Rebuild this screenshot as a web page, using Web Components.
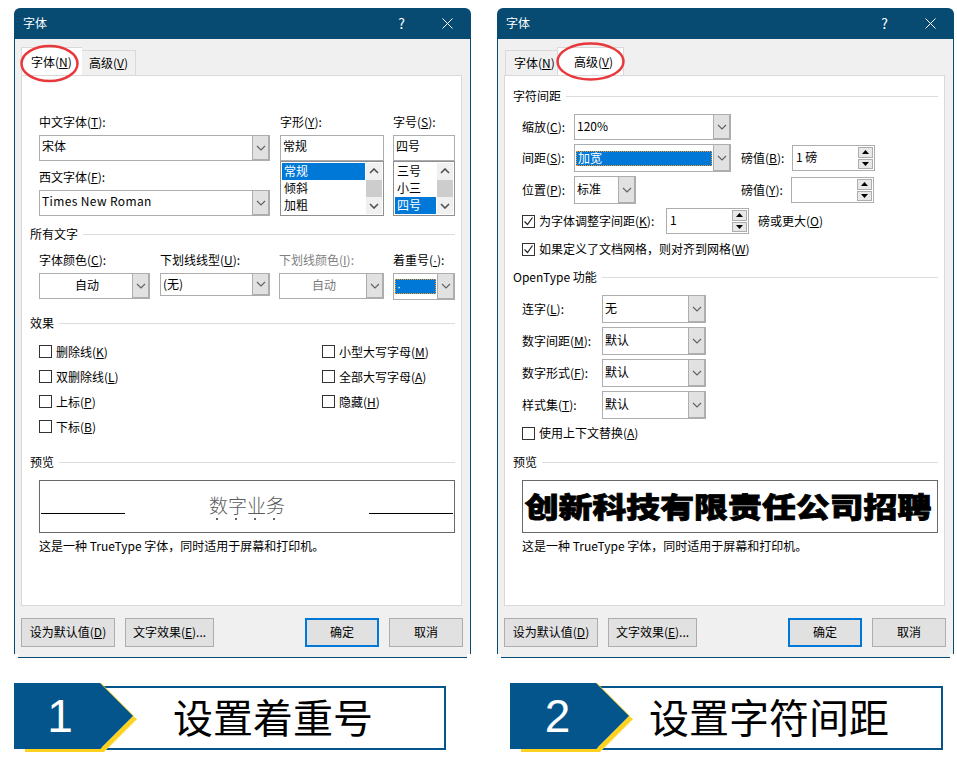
<!DOCTYPE html>
<html lang="zh">
<head>
<meta charset="utf-8">
<title>字体</title>
<style>
  html, body { margin: 0; background: #fff; }
  body { font: 12px/16px "Noto Sans CJK SC", "Liberation Sans", sans-serif; color: #000; overflow: hidden; }
</style>
</head>
<body>
<slide-page></slide-page>

<script>
const CHEVRON = `<svg width="10" height="6" viewBox="0 0 10 6"><path d="M1 1l4 4 4-4" fill="none" stroke="#606060" stroke-width="1.1"/></svg>`;

// Basisklasse: Shadow Root anlegen, Markup aus render() setzen
class Base extends HTMLElement {
  constructor() {
    super();
    this.attachShadow({ mode: "open" });
  }
  connectedCallback() {
    this.shadowRoot.innerHTML = this.render();
  }
}

class FwTab extends Base {
  render() {
    const active = this.hasAttribute("active");
    const w = this.getAttribute("w");
    const pad = this.getAttribute("pad");
    return `<style>
      :host { display: block; box-sizing: border-box; width: ${w}px; height: ${active ? 28 : 25}px;
        padding-left: ${pad}px; padding-top: ${active ? 6 : 4}px; margin-left: ${this.getAttribute("ml") || 0}px;
        border: 1px solid #d9d9d9; border-bottom: 0; background: ${active ? "#fff" : "#f0f0f0"};
        position: relative; z-index: ${active ? 1 : 0}; white-space: nowrap; }
      ${active ? "" : ":host { border-left: 0; }"}
      :host([first]) { border-left: 1px solid #d9d9d9; border-right: 0; }
    </style><slot></slot>`;
  }
}

class FwDialog extends Base {
  render() {
    return `<style>
      :host { display: block; width: 457px; position: relative; }
      .title { height: 31px; background: #074a72; color: #fff; border-radius: 6px 6px 0 0; display: flex; align-items: center; padding-left: 9px; }
      .title span { flex: 1; padding-bottom: 2px; }
      .title b { width: 45px; font-weight: 400; text-align: center; display: flex; justify-content: center; align-items: center; }
      .title b.q { font-size: 14px; padding-bottom: 2px; margin-left: -1px; margin-right: 1px; }
      .title b:last-child { margin-right: 1px; }
      .body { background: #f0f0f0; border: solid #074a72; border-width: 0 1px; padding: 9px 7px 7px 6px; }
      .tabs { height: 27px; display: flex; align-items: flex-end; }
      .panel { box-sizing: border-box; width: 441px; height: 531px; background: #fff; border: 1px solid #d9d9d9; }
      .foot { height: 3px; background: #f0f0f0; border-bottom: 1px solid #074a72; margin: 0 4px; }
      .btns { display: flex; margin-top: 12px; }
      .ring { position: absolute; left: 0; top: 0; pointer-events: none; z-index: 3; }
    </style>
    <div class="title"><span>字体</span><b class="q">?</b><b><svg width="11" height="11" viewBox="0 0 11 11"><path d="M.5.5l10 10M10.5.5l-10 10" stroke="#fff" fill="none"/></svg></b></div>
    <div class="body">
      <div class="tabs"><slot name="tabs"></slot></div>
      <div class="panel"><slot></slot></div>
      <div class="btns"><slot name="buttons"></slot></div>
    </div>
    <div class="foot"></div>
    <svg class="ring" width="457" height="90"><ellipse cx="${this.getAttribute("cx")}" cy="${this.getAttribute("cy")}" rx="${this.getAttribute("rx")}" ry="${this.getAttribute("ry")}" fill="none" stroke="#e8383b" stroke-width="2.5"/></svg>`;
  }
}

class FwButton extends Base {
  render() {
    const def = this.hasAttribute("default");
    return `<style>
      :host { display: flex; align-items: center; justify-content: center; box-sizing: border-box; height: 29px; padding-bottom: 2px;
        width: ${this.getAttribute("w")}px; margin-left: ${this.getAttribute("ml") || 10}px; background: #e1e1e1; white-space: nowrap;
        border: ${def ? "2px solid #0078d7" : "1px solid #adadad"}; }
    </style><span><slot></slot></span>`;
  }
}

class FwHeading extends Base {
  render() {
    return `<style>
      :host { display: flex; align-items: center; gap: 5px; height: 16px; }
      i { flex: 1; height: 1px; background: #dcdcdc; }
    </style><span><slot></slot></span><i></i>`;
  }
}

class FwCombo extends Base {
  render() {
    const val = this.getAttribute("value") || "";
    const sel = this.hasAttribute("selected");
    const center = this.hasAttribute("center");
    const off = this.hasAttribute("disabled");
    const noBtn = this.hasAttribute("nobtn");
    return `<style>
      :host { display: flex; box-sizing: border-box; height: 26px; border: 1px solid #adadad; background: #fff; white-space: nowrap; }
      .t { flex: 1; min-width: 0; display: flex; align-items: center; padding-left: ${sel ? 0 : 2}px; padding-bottom: ${sel ? 0 : "var(--pb, 2px)"};
        ${center ? "justify-content: center;" : ""} ${off ? "color: #7a7a7a;" : ""} letter-spacing: var(--ls, 0); }
      .s { flex: 1; height: 15px; margin: 0 1px; padding-left: 2px; background: #0078d7; color: #fff; outline: 1px dotted #f7941d; outline-offset: -1px; display: flex; align-items: center; }
      .b { box-sizing: border-box; width: 18px; margin: -1px -1px -1px 0; background: #e1e1e1; border: 1px solid #adadad;
        border-width: 1px 2px 2px 1px; display: flex; align-items: center; justify-content: center; }
    </style><div class="t">${sel ? `<div class="s">${val}</div>` : val}</div>${noBtn ? "" : `<div class="b">${CHEVRON}</div>`}`;
  }
}

class FwList extends Base {
  render() {
    const items = this.getAttribute("items").split(",");
    const sel = +this.getAttribute("sel");
    return `<style>
      :host { display: flex; box-sizing: border-box; height: 55px; border: 1px solid #8f8f94; padding: 1px; background: #fff; white-space: nowrap; }
      .i { flex: 1; }
      .i div { height: 17px; line-height: 16px; padding-left: 2px; margin-right: 1px; }
      .i .on { background: #0078d7; color: #fff; }
      .sb { width: 16px; background: #f0f0f0; display: flex; flex-direction: column; }
      .sb div { height: 17px; display: flex; align-items: center; justify-content: center; }
      .sb .th { background: #cdcdcd; }
      svg path { stroke: #505050; stroke-width: 1.6; }
    </style>
    <div class="i">${items.map((t, n) => `<div class="${n === sel ? "on" : ""}">${t}</div>`).join("")}</div>
    <div class="sb"><div style="transform:scaleY(-1)">${CHEVRON}</div><div class="th"></div><div>${CHEVRON}</div></div>`;
  }
}

class FwSpin extends Base {
  render() {
    return `<style>
      :host { display: flex; box-sizing: border-box; width: 83px; height: 26px; border: 1px solid #adadad; background: #fff; padding: 1px; white-space: nowrap; }
      .t { flex: 1; padding-left: 2px; line-height: 20px; }
      .c { width: 15px; display: flex; flex-direction: column; gap: 1px; }
      .c div { flex: 1; background: #e8e8e8; border: 1px solid #adadad; display: flex; align-items: center; justify-content: center; }
      svg { display: block; }
    </style>
    <div class="t">${this.getAttribute("value") || ""}</div>
    <div class="c">
      <div><svg width="7" height="4"><path d="M3.5 0L7 4H0z"/></svg></div>
      <div><svg width="7" height="4"><path d="M0 0h7L3.5 4z"/></svg></div>
    </div>`;
  }
}

class FwCheck extends Base {
  render() {
    const on = this.hasAttribute("checked");
    return `<style>
      :host { display: flex; align-items: center; gap: 4px; white-space: nowrap; }
      .b { box-sizing: border-box; width: 13px; height: 13px; border: 1px solid #333; background: #fff; flex: none; display: block; }
      svg { display: block; }
    </style>
    <div class="b">${on ? `<svg width="11" height="11" viewBox="0 0 11 11"><path d="M1.5 5.5l3 3 5-7" fill="none" stroke="#222" stroke-width="1.2"/></svg>` : ""}</div><span><slot></slot></span>`;
  }
}

// Seite "字体" (erster Reiter)
class FontPage extends Base {
  render() {
    return `<style>
      :host { display: block; padding: 38px 6px 0 8px; }
      .col { display: flex; flex-direction: column; }
      .fonts, .row4 { display: flex; align-items: flex-start; margin-left: 9px; }
      .fonts fw-combo { --pb: 4px; }
      .lbl { height: 16px; margin-bottom: 5px; white-space: nowrap; }
      .off { color: #808080; }
      .sec { margin-top: 8px; }
      .dot { font-family: "Liberation Sans", sans-serif; }
      .checks { display: grid; grid-template-columns: 283px 1fr; grid-auto-rows: 25px; margin: 8px 0 0 9px; }
      .prev { box-sizing: border-box; height: 53px; margin: 10px 0 0 9px; border: 1px solid #696969; padding: 0 1px; display: flex; justify-content: space-between; position: relative; }
      .prev i { width: 84px; height: 1px; background: #000; align-self: flex-end; margin-bottom: 18px; }
      .word { font-size: 19px; line-height: 22px; margin-top: 13px; color: #5c5c5c; font-weight: 300; }
      .dots { position: absolute; left: 176px; top: 37px; display: flex; gap: 17px; }
      .dots b { width: 2px; height: 2px; border-radius: 50%; background: #333; }
      .cap { margin-top: 5px; height: 16px; margin-left: 9px; white-space: nowrap; }
    </style>
    <div class="fonts">
      <div class="col" style="width:231px">
        <div class="lbl">中文字体(<u>T</u>):</div>
        <fw-combo value="宋体"></fw-combo>
        <div class="lbl sec">西文字体(<u>F</u>):</div>
        <fw-combo value="Times New Roman" style="--ls:.37px"></fw-combo>
      </div>
      <div class="col" style="width:104px;margin-left:10px">
        <div class="lbl">字形(<u>Y</u>):</div>
        <fw-combo value="常规" nobtn></fw-combo>
        <fw-list items="常规,倾斜,加粗" sel="0"></fw-list>
      </div>
      <div class="col" style="width:62px;margin-left:9px">
        <div class="lbl">字号(<u>S</u>):</div>
        <fw-combo value="四号" nobtn></fw-combo>
        <fw-list items="三号,小三,四号" sel="2"></fw-list>
      </div>
    </div>
    <fw-heading style="margin-top:10px">所有文字</fw-heading>
    <div class="row4" style="margin-top:10px">
      <div class="col" style="width:111px">
        <div class="lbl">字体颜色(<u>C</u>):</div>
        <fw-combo value="自动" center></fw-combo>
      </div>
      <div class="col" style="width:110px;margin-left:10px">
        <div class="lbl">下划线线型(<u>U</u>):</div>
        <fw-combo value="(无)" style="height:23px"></fw-combo>
      </div>
      <div class="col" style="width:105px;margin-left:9px">
        <div class="lbl off">下划线颜色(<u>I</u>):</div>
        <fw-combo value="自动" center disabled></fw-combo>
      </div>
      <div class="col" style="width:62px;margin-left:9px">
        <div class="lbl">着重号(<u class="dot">·</u>):</div>
        <fw-combo class="dot" value="·" selected style="height:27px"></fw-combo>
      </div>
    </div>
    <fw-heading style="margin-top:15px">效果</fw-heading>
    <div class="checks">
      <fw-check>删除线(<u>K</u>)</fw-check><fw-check>小型大写字母(<u>M</u>)</fw-check>
      <fw-check>双删除线(<u>L</u>)</fw-check><fw-check>全部大写字母(<u>A</u>)</fw-check>
      <fw-check>上标(<u>P</u>)</fw-check><fw-check>隐藏(<u>H</u>)</fw-check>
      <fw-check>下标(<u>B</u>)</fw-check>
    </div>
    <fw-heading style="margin-top:15px">预览</fw-heading>
    <div class="prev"><i></i><span class="word">数字业务</span><i></i>
      <div class="dots"><b></b><b></b><b></b><b></b></div>
    </div>
    <div class="cap">这是一种 TrueType 字体，同时适用于屏幕和打印机。</div>`;
  }
}

// Seite "高级" (zweiter Reiter)
class AdvancedPage extends Base {
  render() {
    const stylesRow = (lbl, key, val) => `<div class="r ot"><div class="l2">${lbl}(<u>${key}</u>):</div><fw-combo value="${val}"></fw-combo></div>`;
    return `<style>
      :host { display: block; padding: 12px 6px 0 8px; }
      .r { display: flex; align-items: center; margin: 4px 0 0 9px; white-space: nowrap; }
      .l { width: 52px; flex: none; }
      .l2 { width: 80px; flex: none; }
      .c157 { width: 157px; flex: none; }
      .p { width: 51px; margin-left: 10px; flex: none; }
      .ot fw-combo { width: 104px; height: 28px; }
      .prev { box-sizing: border-box; height: 53px; margin: 10px 0 0 9px; border: 1px solid #696969; display: flex; align-items: center; justify-content: center; overflow: hidden; }
      .big { font-size: 28px; line-height: 30px; font-weight: 900; margin: -2px 0 0 -4px; transform: scaleX(1.21); white-space: nowrap; -webkit-text-stroke: .8px #000; }
      .cap { margin-top: 5px; height: 16px; margin-left: 9px; white-space: nowrap; }
    </style>
    <fw-heading>字符间距</fw-heading>
    <div class="r" style="margin-top:10px"><div class="l">缩放(<u>C</u>):</div><fw-combo class="c157" value="120%"></fw-combo></div>
    <div class="r"><div class="l">间距(<u>S</u>):</div><fw-combo class="c157" style="height:28px" value="加宽" selected></fw-combo>
      <div class="p">磅值(<u>B</u>):</div><fw-spin value="1 磅"></fw-spin></div>
    <div class="r"><div class="l">位置(<u>P</u>):</div><div class="c157"><fw-combo style="width:62px;height:28px" value="标准"></fw-combo></div>
      <div class="p">磅值(<u>Y</u>):</div><fw-spin style="margin-left:-1px"></fw-spin></div>
    <div class="r"><fw-check checked style="width:144px">为字体调整字间距(<u>K</u>):</fw-check><fw-spin value="1"></fw-spin>
      <div style="margin-left:9px">磅或更大(<u>O</u>)</div></div>
    <fw-check checked style="margin:7px 0 0 9px">如果定义了文档网格，则对齐到网格(<u>W</u>)</fw-check>
    <fw-heading style="margin-top:12px">OpenType 功能</fw-heading>
    <div style="height:6px"></div>
    ${stylesRow("连字", "L", "无")}
    ${stylesRow("数字间距", "M", "默认")}
    ${stylesRow("数字形式", "F", "默认")}
    ${stylesRow("样式集", "T", "默认")}
    <fw-check style="margin:6px 0 0 9px">使用上下文替换(<u>A</u>)</fw-check>
    <fw-heading style="margin-top:13px">预览</fw-heading>
    <div class="prev"><span class="big">创新科技有限责任公司招聘</span></div>
    <div class="cap">这是一种 TrueType 字体，同时适用于屏幕和打印机。</div>`;
  }
}

// Blaue Pfeil-Beschriftung unter den Dialogen
class FwBanner extends Base {
  render() {
    return `<style>
      :host { display: block; position: relative; height: 69px; width: ${this.getAttribute("w")}px; }
      .frame { box-sizing: border-box; height: 64px; margin: 3px 0 0 86px; border: 2px solid #04558c; display: flex; align-items: center;
        padding: 0 0 4px ${this.getAttribute("pad")}px; font-size: 40px; line-height: 48px; white-space: nowrap; }
      svg { position: absolute; left: 0; top: 0; }
      .n { position: absolute; left: 0; top: 0; width: ${this.getAttribute("nw")}px; height: 66px; display: flex; align-items: center; justify-content: center;
        color: #fff; font: 46px/66px "Liberation Sans", sans-serif; }
    </style>
    <div class="frame"><span><slot></slot></span></div>
    <svg width="124" height="69">
      <path d="M11 66h75l33-33 4 3-33 33H11z" fill="#ffd21f"/>
      <path d="M87 0l33 33-1 .5L86 1z" fill="#ffd21f"/>
      <path d="M0 0h86l33 33-33 33H0z" fill="#04558c"/>
    </svg>
    <div class="n">${this.getAttribute("num")}</div>`;
  }
}

class SlidePage extends Base {
  render() {
    const buttons = `
      <fw-button slot="buttons" w="94" ml="0">设为默认值(<u>D</u>)</fw-button>
      <fw-button slot="buttons" w="89">文字效果(<u>E</u>)...</fw-button>
      <fw-button slot="buttons" w="74" ml="91" default>确定</fw-button>
      <fw-button slot="buttons" w="74">取消</fw-button>`;
    return `<style>
      :host { display: block; padding: 8px 0 0 14px; }
      .top { display: flex; gap: 26px; }
      .bottom { display: flex; gap: 64px; margin-top: 25px; }
    </style>
    <div class="top">
      <fw-dialog cx="35.5" cy="55.5" rx="28" ry="17.5">
        <fw-tab slot="tabs" active first w="61" pad="9">字体(<u>N</u>)</fw-tab>
        <fw-tab slot="tabs" w="54" pad="7">高级(<u>V</u>)</fw-tab>
        <font-page></font-page>
        ${buttons}
      </fw-dialog>
      <fw-dialog cx="93.5" cy="53.5" rx="33" ry="18">
        <fw-tab slot="tabs" first w="52" ml="1" pad="8">字体(<u>N</u>)</fw-tab>
        <fw-tab slot="tabs" active w="67" pad="16">高级(<u>V</u>)</fw-tab>
        <advanced-page></advanced-page>
        ${buttons}
      </fw-dialog>
    </div>
    <div class="bottom">
      <fw-banner w="432" pad="71" num="1" nw="92">设置着重号</fw-banner>
      <fw-banner w="433" pad="51" num="2" nw="95">设置字符间距</fw-banner>
    </div>`;
  }
}

customElements.define("fw-tab", FwTab);
customElements.define("fw-dialog", FwDialog);
customElements.define("fw-button", FwButton);
customElements.define("fw-heading", FwHeading);
customElements.define("fw-combo", FwCombo);
customElements.define("fw-list", FwList);
customElements.define("fw-spin", FwSpin);
customElements.define("fw-check", FwCheck);
customElements.define("font-page", FontPage);
customElements.define("advanced-page", AdvancedPage);
customElements.define("fw-banner", FwBanner);
customElements.define("slide-page", SlidePage);
</script>
</body>
</html>
